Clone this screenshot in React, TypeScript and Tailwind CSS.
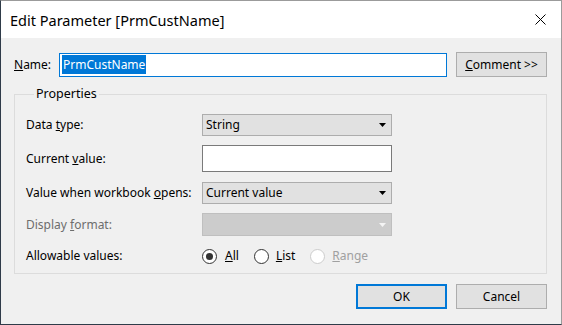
import { useState } from 'react';

const Arrow = ({ disabled = false }: { disabled?: boolean }) => (
  <svg width="7" height="4" viewBox="0 0 7 4" className="shrink-0">
    <path d="M0 0h7L3.5 4z" fill={disabled ? '#f4f4f4' : '#000'} />
  </svg>
);

const Radio = ({ checked = false, disabled = false }: { checked?: boolean; disabled?: boolean }) => (
  <span
    className={`flex h-[15px] w-[15px] items-center justify-center rounded-full border bg-white ${disabled ? 'border-[#cccccc]' : 'border-[#333333]'}`}
  >
    {checked && <span className="h-[7px] w-[7px] rounded-full bg-[#333333]" />}
  </span>
);

const Row = ({ label, children, disabled = false }: { label: React.ReactNode; children: React.ReactNode; disabled?: boolean }) => (
  <div className="flex items-center">
    <span className={`w-[176px] ${disabled ? 'text-[#6d6d6d]' : 'text-black'}`}>{label}</span>
    {children}
  </div>
);

export default function App() {
  const [allow, setAllow] = useState('all');
  return (
    <div
      className="flex h-[325px] w-[562px] flex-col border border-t-[#9b9b9b] border-r-[#9b9b9b] border-b-[#2f3b49] border-l-[#2f3b49] bg-[#f0f0f0] text-[12px] leading-[16px] text-black"
      style={{ fontFamily: '"Noto Sans", "Liberation Sans", sans-serif' }}
    >
      <div className="flex h-[37px] items-center justify-between bg-white pl-[9px] pr-[15px]">
        <span className="text-[14.5px]">Edit Parameter [PrmCustName]</span>
        <svg width="11" height="11" viewBox="0 0 11 11">
          <path d="M0.5 0.5l10 10M10.5 0.5l-10 10" stroke="#000" strokeWidth="1" />
        </svg>
      </div>

      <div className="flex flex-1 flex-col pl-[13px] pr-[14px]">
        <div className="mt-[14px] flex h-[25px] items-center">
          <span className="w-[45px]">
            <u>N</u>ame:
          </span>
          <div className="flex h-[24px] w-[388px] items-center border border-[#0078d7] bg-white px-[2px]">
            <span className="bg-[#0078d7] px-[1px] leading-[19px] text-white">PrmCustName</span>
          </div>
          <button className="ml-[9px] h-[25px] w-[91px] border border-[#adadad] bg-[#e1e1e1]">
            <u>C</u>omment &gt;&gt;
          </button>
        </div>

        <fieldset className="mt-[9px] h-[188px] border border-[#dcdcdc] pl-[11px] pr-[10px]">
          <legend className="ml-[8px] px-[2px] text-[12.5px]">Properties</legend>
          <div className="mt-[12px] flex flex-col">
            <Row
              label={
                <>
                  Data <u>t</u>ype:
                </>
              }
            >
              <div className="flex h-[22px] w-[190px] items-center justify-between border border-[#adadad] bg-[#e1e1e1] pl-[3px] pr-[5px]">
                <span>String</span>
                <Arrow />
              </div>
            </Row>
            <div className="mt-[9px]">
              <Row
                label={
                  <>
                    Current <u>v</u>alue:
                  </>
                }
              >
                <div className="h-[27px] w-[190px] border border-[#7a7a7a] bg-white" />
              </Row>
            </div>
            <div className="mt-[10px]">
              <Row
                label={
                  <>
                    Value when workbook <u>o</u>pens:
                  </>
                }
              >
                <div className="flex h-[22px] w-[190px] items-center justify-between border border-[#adadad] bg-[#e1e1e1] pl-[3px] pr-[5px]">
                  <span>Current value</span>
                  <Arrow />
                </div>
              </Row>
            </div>
            <div className="mt-[9px]">
              <Row
                disabled
                label={
                  <>
                    Display <u>f</u>ormat:
                  </>
                }
              >
                <div className="flex h-[23px] w-[190px] items-center justify-end border border-[#bfbfbf] bg-[#cccccc] pr-[5px]">
                  <Arrow disabled />
                </div>
              </Row>
            </div>
            <div className="mt-[12px]">
              <Row label="Allowable values:">
                <div className="flex h-[16px] items-center">
                  <button onClick={() => setAllow('all')} className="flex items-center gap-[8px]">
                    <Radio checked={allow === 'all'} />
                    <span>
                      <u>A</u>ll
                    </span>
                  </button>
                  <button onClick={() => setAllow('list')} className="ml-[15px] flex items-center gap-[7px]">
                    <Radio checked={allow === 'list'} />
                    <span>
                      <u>L</u>ist
                    </span>
                  </button>
                  <span className="ml-[15px] flex items-center gap-[7px] text-[#a0a0a0]">
                    <Radio disabled />
                    <span>
                      <u>R</u>ange
                    </span>
                  </span>
                </div>
              </Row>
            </div>
          </div>
        </fieldset>

        <div className="mt-[10px] flex justify-end gap-[9px]">
          <button className="h-[25px] w-[91px] border-2 border-[#0078d7] bg-[#e1e1e1]">OK</button>
          <button className="h-[25px] w-[91px] border border-[#adadad] bg-[#e1e1e1]">Cancel</button>
        </div>
      </div>
    </div>
  );
}
